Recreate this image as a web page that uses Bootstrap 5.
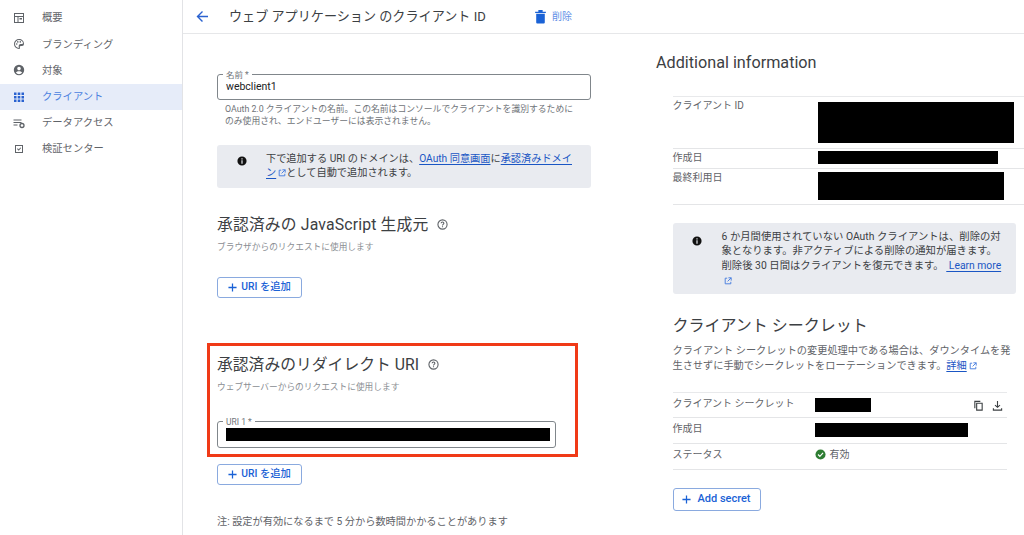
<!DOCTYPE html>
<html lang="ja"><head><meta charset="utf-8"><title>クライアント ID</title>
<link href="https://cdn.jsdelivr.net/npm/bootstrap@5.3.0/dist/css/bootstrap.min.css" rel="stylesheet">
<style>
html,body{height:535px;overflow:hidden}
body{font-family:Roboto,"Noto Sans CJK JP",sans-serif;color:#3c4043;background:#fff;font-size:10.5px}
a{color:#1a56c4;text-decoration-thickness:1px;text-underline-offset:2px}
.shell{height:535px}
.sidenav{width:183px;flex:none;border-right:1px solid #e2e3e6;padding-top:5px}
.sideitem{height:26.2px;padding-left:13px;gap:17px;color:#5f6368;font-size:10.3px}
.sideitem svg{width:12px;height:12px;flex:none;fill:#5f6368}
.sideitem.on{background:#e6ecf9;color:#4a7fe0}
.sideitem.on svg{fill:#2a62d0}
.topbar{height:34px;border-bottom:1px solid #e6e7e9;padding-left:13px;flex:none}
.topbar h1{font-size:13.1px;font-weight:400;margin:0 0 0 20px;width:304px;color:#3c4043;white-space:nowrap}
.trashlbl{color:#5f8fe6;font-size:10px;margin-left:4px}
.formcol{width:473px;flex:none;padding:40px 65px 0 34px}
.infocol{padding:19px 0 0 0;width:368px;flex:none}
.field{position:relative;border:1px solid #80868b;border-radius:3px;height:26px;padding:0 8px;display:flex;align-items:center;font-size:10.5px;color:#202124}
.field .cap{position:absolute;top:-5px;left:5px;background:#fff;padding:0 3px;font-size:8.5px;line-height:10px;color:#70757a}
.redact{background:#000;display:block}
.hintline{font-size:8.8px;line-height:12px;color:#6f7378;padding:3px 8px 0;height:45px;white-space:nowrap}
.notebox{background:#e9ebf0;border-radius:3px;color:#3c4043}
.notebox .ic{width:10px;height:10px;flex:none;fill:#111}
.box-a{width:374px;height:42.5px;padding:7px 18px 0 19.5px;gap:19.5px;font-size:10.2px;line-height:14.3px}
.sechead{font-size:15.8px;font-weight:400;color:#3c4043;line-height:20px;margin:0;gap:9px;white-space:nowrap}
.js-head{letter-spacing:.15px}
.sechead svg{width:11px;height:11px;fill:none;stroke:#5f6368;stroke-width:1.2}
.subnote{font-size:8.7px;line-height:11px;color:#8a8e93;margin:7px 0 0}
.addbtn{--bs-btn-padding-x:0;--bs-btn-padding-y:0;--bs-btn-font-size:10.3px;--bs-btn-color:#1a62d6;--bs-btn-border-color:#8aaadf;--bs-btn-border-radius:3px;width:85px;height:21px;font-weight:500;gap:4px;display:flex;align-items:center;justify-content:center}
.addbtn svg{width:9px;height:9px;stroke:#1a62d6;stroke-width:1.4;fill:none}
.mark-js{margin-top:27px}
.redbox{border:3px solid #f03a17;width:371px;height:114px;margin:45px 0 0 -10px;padding:9px 0 0 7px}
.redbox .field{width:339px;height:27px;margin-top:28px;padding:0 5px 0 8px}
.redbox .redact{width:325px;height:13px;margin-top:1px}
.noteline{font-size:10.2px;color:#5f6368;margin-top:30px;line-height:14px;white-space:nowrap}
.infotitle{font-size:16.2px;font-weight:400;color:#3c4043;margin:0;line-height:20px}
.dl{margin-left:16.5px;border-top:1px solid #e8e9eb;font-size:10px;color:#5f6368}
.dlrow{border-bottom:1px solid #e4e5e7;padding-top:3px}
.dlkey{flex:none;line-height:13px;padding-top:1px}
.k1{width:145px}.k2{width:142px}
.box-b{margin:18px 0 0 16.5px;width:343px;height:71px;padding:7px 14px 0 19px;gap:20px;font-size:10.35px;line-height:14.7px}
.box-b .ic{margin-top:6px}
.secttl{font-size:16px;font-weight:400;margin:22px 0 0 16.5px;line-height:20px;color:#3c4043}
.secsub{margin:7px 0 0 16.5px;font-size:10.2px;line-height:15px;color:#5f6368;width:343px}
.extic{width:8px;height:8px;vertical-align:-1px;fill:none;stroke:#4a7fe0;stroke-width:1.2;margin-left:2px}
.secdl{width:334px;margin-top:19px}
.iconset svg{width:11px;height:11px;fill:none;stroke:#3c4043;stroke-width:1.2}
.bigadd{width:88px;height:23.5px;margin:18px 0 0 16.5px;--bs-btn-font-size:11px;gap:6px}
.addfirst{margin-top:24px}
.addsecond{margin-top:7px}
.dl-first{margin-top:23px}
.dl-first .dlrow{padding-top:2px}
.dl-first .dlkey{padding-top:0}
.r-id{height:52px}.r-date{height:19.5px}.r-last{height:36px}
.rd-id{width:196px;height:41px;margin-top:3px}
.rd-date{width:180px;height:13px}
.rd-last{width:186px;height:28px;margin-top:1px}
.r-sec{height:25.7px}
.rd-s1{width:56px;height:14px;margin-top:2px}
.rd-s2{width:153px;height:14px;margin-top:2px}
.statusval{line-height:13px;padding-top:1px}
.statusval svg{margin-top:1px}
</style></head><body>
<div class="shell d-flex">
<nav class="sidenav">
<div class="sideitem d-flex align-items-center"><svg viewBox="0 0 12 12"><path d="M1 1h10v10H1zM2 2v2h8V2zM2 5v5h2.500V5zM5.500 5v5H10V5zM6.500 6h2.500v1.500H6.500z" fill-rule="evenodd"/></svg><span>概要</span></div>
<div class="sideitem d-flex align-items-center"><svg viewBox="0 0 12 12"><path d="M6 1a5 5 0 0 0 0 10c1 0 1.300-.8.900-1.400-.5-.8 0-1.600 1-1.600H9a2 2 0 0 0 2-2C11 3 8.800 1 6 1zm0 1c2.300 0 4 1.500 4 3a1 1 0 0 1-1 1H7.900C6 6 5.200 7.700 5.900 9.900 3.700 9.800 2 8 2 6s1.800-4 4-4z" fill-rule="evenodd"/><circle cx="3.700" cy="6" r=".8"/><circle cx="4.800" cy="3.900" r=".8"/><circle cx="7.300" cy="3.900" r=".8"/></svg><span>ブランディング</span></div>
<div class="sideitem d-flex align-items-center"><svg viewBox="0 0 12 12"><path d="M6 .8a5.200 5.200 0 1 0 0 10.400A5.200 5.200 0 0 0 6 .8zm0 2a1.800 1.800 0 1 1 0 3.600 1.800 1.800 0 0 1 0-3.600zM2.900 8.600C3.500 7.700 4.700 7.300 6 7.300s2.500.4 3.100 1.300A4 4 0 0 1 6 10.200a4 4 0 0 1-3.100-1.600z" fill-rule="evenodd"/></svg><span>対象</span></div>
<div class="sideitem on d-flex align-items-center"><svg viewBox="0 0 12 12"><path d="M1 1.500h2.500V4H1zM4.700 1.500h2.600V4H4.700zM8.500 1.500H11V4H8.500zM1 5h2.500v2.500H1zM4.700 5h2.600v2.500H4.700zM8.500 5H11v2.500H8.500zM1 8.500h2.500V11H1zM4.700 8.500h2.600V11H4.700zM8.500 8.500H11V11H8.500z"/></svg><span>クライアント</span></div>
<div class="sideitem d-flex align-items-center"><svg viewBox="0 0 12 12"><path d="M.5 2.500h8v1h-8zM.5 5h8v1h-8zM.5 7.500h4v1h-4z"/><circle cx="9" cy="8.500" r="2" fill="none" stroke="#5f6368" stroke-width="1.300"/></svg><span>データアクセス</span></div>
<div class="sideitem d-flex align-items-center"><svg viewBox="0 0 12 12"><path d="M2 2h8v8H2zm1 1v6h6V3z" fill-rule="evenodd"/><path d="M4 6l.7-.7 1 1 1.800-1.900.7.700L5.700 7.700z"/></svg><span>検証センター</span></div>
</nav>
<div class="flex-grow-1 d-flex flex-column">
<header class="topbar d-flex align-items-center">
<svg width="13" height="13" viewBox="0 0 13 13" fill="none" stroke="#2a62d0" stroke-width="1.400"><path d="M12 6.500H1.500M6.500 1.500l-5 5 5 5"/></svg>
<h1>ウェブ アプリケーション のクライアント ID</h1>
<svg width="15" height="15" viewBox="0 0 14 14" fill="#1a62d6"><path d="M2 2.500h10v1.200H2zM5 1h4v1.500H5zM3 4.500h8v8a1 1 0 0 1-1 1H4a1 1 0 0 1-1-1z"/></svg>
<span class="trashlbl">削除</span>
</header>
<div class="d-flex flex-grow-1">
<section class="formcol">
<div class="field"><span class="cap">名前 *</span>webclient1</div>
<div class="hintline">OAuth 2.0 クライアントの名前。この名前はコンソールでクライアントを識別するために<br>のみ使用され、エンドユーザーには表示されません。</div>
<div class="notebox box-a d-flex">
<svg class="ic mt-1" viewBox="0 0 12 12"><path d="M6 .5a5.500 5.500 0 1 0 0 11 5.500 5.500 0 0 0 0-11zM5.300 2.800h1.400v1.400H5.300zM5.300 5.200h1.400v4H5.300z" fill-rule="evenodd"/></svg>
<div>下で追加する URI のドメインは、<a href="#">OAuth 同意画面</a>に<a href="#">承認済みドメイン<svg class="extic" viewBox="0 0 10 10"><path d="M4 1.500H1.500v7h7V6M5.500 1h3.500v3.500M9 1L4.500 5.500"/></svg></a>として自動で追加されます。</div>
</div>
<div class="mark-js">
<h2 class="sechead js-head d-flex align-items-center">承認済みの JavaScript 生成元<svg viewBox="0 0 12 12"><circle cx="6" cy="6" r="5"/><path d="M4.500 4.700C4.500 3.800 5.200 3.300 6 3.300s1.500.5 1.500 1.300c0 1.200-1.500 1.200-1.500 2.400M6 8v1"/></svg></h2>
<p class="subnote">ブラウザからのリクエストに使用します</p>
<button type="button" class="btn btn-outline-primary addbtn addfirst"><svg viewBox="0 0 10 10"><path d="M5 .5v9M.5 5h9"/></svg>URI を追加</button>
</div>
<div class="redbox">
<h2 class="sechead d-flex align-items-center">承認済みのリダイレクト URI<svg viewBox="0 0 12 12"><circle cx="6" cy="6" r="5"/><path d="M4.500 4.700C4.500 3.800 5.200 3.300 6 3.300s1.500.5 1.500 1.300c0 1.200-1.500 1.200-1.500 2.400M6 8v1"/></svg></h2>
<p class="subnote">ウェブサーバーからのリクエストに使用します</p>
<div class="field"><span class="cap">URI 1 *</span><span class="redact"></span></div>
</div>
<button type="button" class="btn btn-outline-primary addbtn addsecond"><svg viewBox="0 0 10 10"><path d="M5 .5v9M.5 5h9"/></svg>URI を追加</button>
<div class="noteline">注: 設定が有効になるまで 5 分から数時間かかることがあります</div>
</section>
<aside class="infocol">
<h2 class="infotitle">Additional information</h2>
<div class="dl dl-first">
<div class="dlrow r-id d-flex"><div class="dlkey k1">クライアント ID</div><span class="redact rd-id"></span></div>
<div class="dlrow r-date d-flex"><div class="dlkey k1">作成日</div><span class="redact rd-date"></span></div>
<div class="dlrow r-last d-flex"><div class="dlkey k1">最終利用日</div><span class="redact rd-last"></span></div>
</div>
<div class="notebox box-b d-flex">
<svg class="ic" viewBox="0 0 12 12"><path d="M6 .5a5.500 5.500 0 1 0 0 11 5.500 5.500 0 0 0 0-11zM5.300 2.800h1.400v1.400H5.300zM5.300 5.200h1.400v4H5.300z" fill-rule="evenodd"/></svg>
<div>6 か月間使用されていない OAuth クライアントは、削除の対象となります。非アクティブによる削除の通知が届きます。削除後 30 日間はクライアントを復元できます。 <a href="#">&nbsp;Learn more</a> <svg class="extic" viewBox="0 0 10 10"><path d="M4 1.500H1.500v7h7V6M5.500 1h3.500v3.500M9 1L4.500 5.500"/></svg></div>
</div>
<h2 class="secttl">クライアント シークレット</h2>
<p class="secsub">クライアント シークレットの変更処理中である場合は、ダウンタイムを発生させずに手動でシークレットをローテーションできます。<a href="#">詳細</a><svg class="extic" viewBox="0 0 10 10"><path d="M4 1.500H1.500v7h7V6M5.500 1h3.500v3.500M9 1L4.500 5.500"/></svg></p>
<div class="dl secdl">
<div class="dlrow r-sec d-flex"><div class="dlkey k2">クライアント シークレット</div><span class="redact rd-s1"></span>
<div class="iconset ms-auto d-flex gap-2 pe-1 pt-1"><svg viewBox="0 0 12 12"><path d="M4 3.500h6v7.500H4zM2 9V1.500h6"/></svg><svg viewBox="0 0 12 12"><path d="M6 1v7M3.300 5.500L6 8l2.700-2.500M1.500 9v2h9V9"/></svg></div></div>
<div class="dlrow r-sec d-flex"><div class="dlkey k2">作成日</div><span class="redact rd-s2"></span></div>
<div class="dlrow r-sec d-flex"><div class="dlkey k2">ステータス</div><span class="d-flex align-items-start gap-1 statusval"><svg width="11" height="11" viewBox="0 0 12 12"><circle cx="6" cy="6" r="5.500" fill="#2e7d32"/><path d="M3.300 6l2 2 3.500-3.700" fill="none" stroke="#fff" stroke-width="1.300"/></svg>有効</span></div>
</div>
<button type="button" class="btn btn-outline-primary addbtn bigadd"><svg viewBox="0 0 10 10"><path d="M5 .5v9M.5 5h9"/></svg>Add secret</button>
</aside>
</div>
</div>
</div>
</body></html>
